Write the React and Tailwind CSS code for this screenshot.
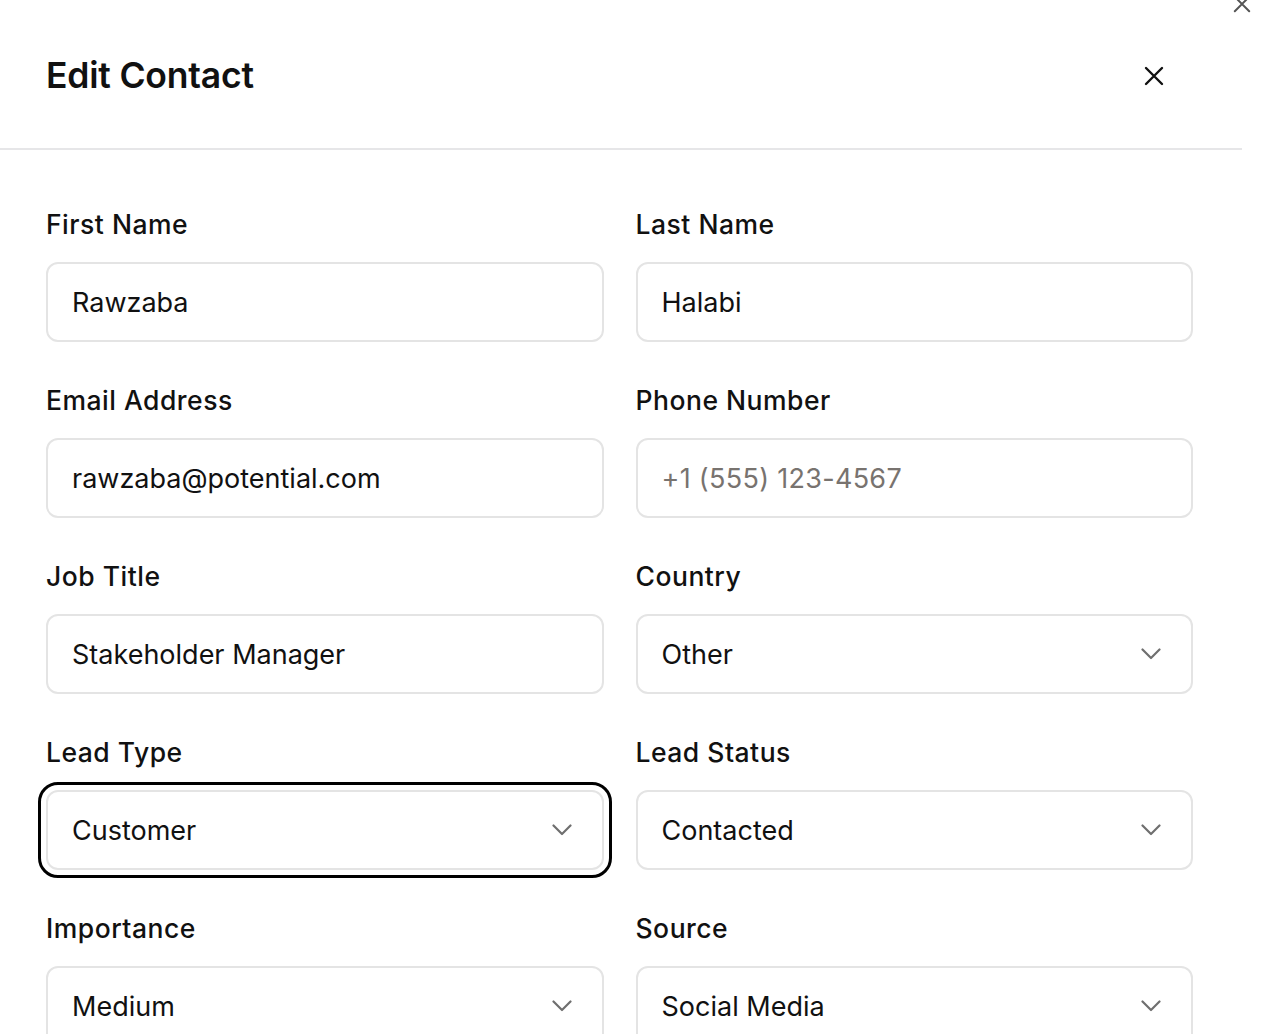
import React from 'react'

const font = { fontFamily: 'Inter, "Noto Sans", sans-serif' }

function Chevron() {
  return (
    <svg width="20" height="12" viewBox="0 0 20 12" fill="none" className="shrink-0 mr-[6px]">
      <polyline points="1.5,1.5 10,10 18.5,1.5" stroke="#6f6f6f" strokeWidth="2.2" strokeLinecap="round" strokeLinejoin="round" />
    </svg>
  )
}

function CloseIcon({ size = 20, color = '#111', width = 2.4 }) {
  return (
    <svg width={size} height={size} viewBox="0 0 20 20" fill="none">
      <path d="M2 2L18 18M18 2L2 18" stroke={color} strokeWidth={width} strokeLinecap="round" />
    </svg>
  )
}

function Field({ label, value, placeholder, select, focused }) {
  return (
    <div className="flex flex-col gap-[20px]">
      <label className="text-[26.5px] leading-[36px] font-medium text-[#111] tracking-[0.5px]">{label}</label>
      <div
        className={
          'h-[80px] rounded-[12px] border-2 border-[#e4e4e4] bg-white px-[24px] flex items-center justify-between ' +
          (focused ? 'outline-[3px] outline-solid outline-black outline-offset-[5px]' : '')
        }
      >
        <span className={'text-[27px] pt-[3px] ' + (value ? 'text-[#111]' : 'text-[#78736f] tracking-[0.3px]')}>
          {value || placeholder}
        </span>
        {select && <Chevron />}
      </div>
    </div>
  )
}

export default function App() {
  const fields = [
    { label: 'First Name', value: 'Rawzaba' },
    { label: 'Last Name', value: 'Halabi' },
    { label: 'Email Address', value: 'rawzaba@potential.com' },
    { label: 'Phone Number', placeholder: '+1 (555) 123-4567' },
    { label: 'Job Title', value: 'Stakeholder Manager' },
    { label: 'Country', value: 'Other', select: true },
    { label: 'Lead Type', value: 'Customer', select: true, focused: true },
    { label: 'Lead Status', value: 'Contacted', select: true },
    { label: 'Importance', value: 'Medium', select: true },
    { label: 'Source', value: 'Social Media', select: true },
  ]

  return (
    <div className="relative bg-white min-h-[1034px] w-full overflow-hidden" style={font}>
      <div className="absolute right-[21px] top-[-5px]">
        <CloseIcon size={18} color="#555" width={2.2} />
      </div>
      <div className="w-[1242px]">
        <div className="h-[150px] border-b-2 border-[#e6e6e8] flex items-center justify-between pl-[46px] pr-[78px] pt-[4px]">
          <h2 className="text-[35.5px] font-semibold text-[#111] tracking-[-0.2px]">Edit Contact</h2>
          <CloseIcon size={20} color="#111" width={2.4} />
        </div>
        <div className="grid grid-cols-2 gap-x-[32px] gap-y-[40px] pt-[56px] pl-[46px] pr-[49px]">
          {fields.map((f) => (
            <Field key={f.label} {...f} />
          ))}
        </div>
      </div>
    </div>
  )
}
